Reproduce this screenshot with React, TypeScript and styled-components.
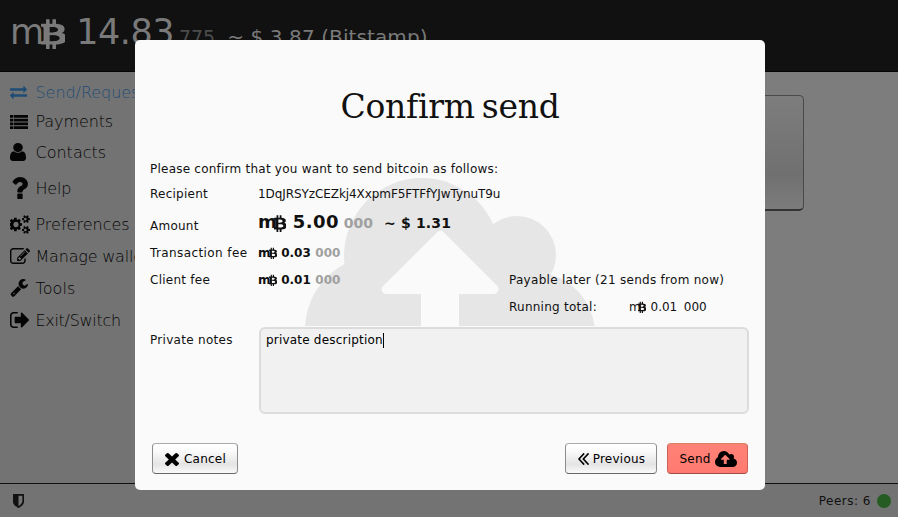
import React from 'react';
import styled, { createGlobalStyle, css } from 'styled-components';

const GlobalStyle = createGlobalStyle`
  *, *::before, *::after { box-sizing: border-box; }
  html, body { margin: 0; padding: 0; }
  body {
    font-family: "DejaVu Sans", Verdana, sans-serif;
    font-size: 12px;
    color: #111;
    overflow: hidden;
  }
`;

/* ---------- icons ---------- */

type IconDef = { box: string; d: string };

const icons: Record<string, IconDef> = {
  exchange: {
    box: '0 288 1792 1344',
    d: 'M1792 1184v192q0 13-9.5 22.5t-22.5 9.5h-1376v192q0 13-9.5 22.5t-22.5 9.5q-12 0-24-10l-319-320q-9-9-9-22 0-14 9-23l320-320q9-9 23-9 13 0 22.5 9.5t9.5 22.5v192h1376q13 0 22.5 9.5t9.5 22.5zm0-544q0 14-9 23l-320 320q-9 9-23 9-13 0-22.5-9.5t-9.5-22.5v-192h-1376q-13 0-22.5-9.5t-9.5-22.5v-192q0-13 9.5-22.5t22.5-9.5h1376v-192q0-14 9-23t23-9q12 0 24 10l319 319q9 9 9 23z',
  },
  list: {
    box: '0 0 18 14',
    d: 'M0 0h3v2.700H0zM3.600 0h14.400v2.700H3.600zM0 3.770h3v2.700H0zM3.600 3.770h14.400v2.700H3.600zM0 7.530h3v2.700H0zM3.600 7.530h14.400v2.700H3.600zM0 11.300h3v2.700H0zM3.600 11.300h14.400v2.700H3.600z',
  },
  user: {
    box: '256 128 1280 1536',
    d: 'M1536 1399q0 109-62.5 187t-150.5 78h-854q-88 0-150.5-78t-62.5-187q0-85 8.5-160.5t31.5-152 58.5-131 94-89 134.5-34.5q131 128 313 128t313-128q76 0 134.5 34.5t94 89 58.5 131 31.5 152 8.5 160.5zm-256-887q0 159-112.5 271.5t-271.5 112.5-271.5-112.5-112.5-271.5 112.5-271.5 271.5-112.5 271.5 112.5 112.5 271.5z',
  },
  question: {
    box: '450 256 960 1280',
    d: 'M1088 1256v240q0 16-12 28t-28 12h-240q-16 0-28-12t-12-28v-240q0-16 12-28t28-12h240q16 0 28 12t12 28zm316-600q0 54-15.5 101t-35 76.5-55 59.5-57.5 43.5-61 35.5q-41 23-68.5 65t-27.5 67q0 17-12 32.5t-28 15.5h-240q-15 0-25.5-18.5t-10.5-37.5v-45q0-83 65-156.5t143-108.5q59-27 84-56t25-76q0-42-46.5-74t-107.5-32q-65 0-108 29-35 25-107 115-13 16-31 16-12 0-25-8l-164-125q-13-10-15.5-25t5.5-28q160-266 464-266 80 0 161 31t146 83 106 127.5 41 158.5z',
  },
  cogs: {
    box: '0 0 1920 1792',
    d: 'M832 896q0-106-75-181t-181-75-181 75-75 181 75 181 181 75 181-75 75-181zm768 512q0-52-38-90t-90-38-90 38-38 90q0 53 37.5 90.5t90.5 37.5 90.5-37.5 37.5-90.5zm0-1024q0-52-38-90t-90-38-90 38-38 90q0 53 37.5 90.5t90.5 37.5 90.5-37.5 37.5-90.5zm-448 421v185q0 10-7 19.5t-16 10.5l-155 24q-11 35-32 76 34 48 90 115 7 11 7 20 0 12-7 19-23 30-82.5 89.5t-78.5 59.5q-11 0-21-7l-115-90q-37 19-77 31-11 108-23 155-7 24-30 24h-186q-11 0-20-7.5t-10-17.5l-23-153q-34-10-75-31l-118 89q-7 7-20 7-11 0-21-8-144-133-144-160 0-9 7-19 10-14 41-53t47-61q-23-44-35-82l-152-24q-10-1-17-9.5t-7-19.5v-185q0-10 7-19.5t16-10.5l155-24q11-35 32-76-34-48-90-115-7-11-7-20 0-12 7-20 22-30 82-89t79-59q11 0 21 7l115 90q34-18 77-32 11-108 23-154 7-24 30-24h186q11 0 20 7.5t10 17.5l23 153q34 10 75 31l118-89q8-7 20-7 11 0 21 8 144 133 144 160 0 8-7 19-12 16-42 54t-45 60q23 48 34 82l152 23q10 2 17 10.5t7 19.5zm768 533v140q0 16-149 31-12 27-30 52 51 113 51 138 0 4-4 7-122 71-124 71-8 0-46-47t-52-68q-20 2-30 2t-30-2q-14 21-52 68t-46 47q-2 0-124-71-4-3-4-7 0-25 51-138-18-25-30-52-149-15-149-31v-140q0-16 149-31 13-29 30-52-51-113-51-138 0-4 4-7 4-2 35-20t59-34 30-16q8 0 46 46.5t52 67.5q20-2 30-2t30 2q51-71 92-112l6-2q4 0 124 70 4 3 4 7 0 25-51 138 17 23 30 52 149 15 149 31zm0-1024v140q0 16-149 31-12 27-30 52 51 113 51 138 0 4-4 7-122 71-124 71-8 0-46-47t-52-68q-20 2-30 2t-30-2q-14 21-52 68t-46 47q-2 0-124-71-4-3-4-7 0-25 51-138-18-25-30-52-149-15-149-31v-140q0-16 149-31 13-29 30-52-51-113-51-138 0-4 4-7 4-2 35-20t59-34 30-16q8 0 46 46.5t52 67.5q20-2 30-2t30 2q51-71 92-112l6-2q4 0 124 70 4 3 4 7 0 25-51 138 17 23 30 52 149 15 149 31z',
  },
  edit: {
    box: '0 128 1792 1408',
    d: 'M888 1184l116-116-152-152-116 116v56h96v96h56zm440-720q-16-16-33 1l-350 350q-17 17-1 33t33-1l350-350q17-17 1-33zm80 594v190q0 119-84.5 203.5t-203.5 84.5h-832q-119 0-203.5-84.5t-84.5-203.5v-832q0-119 84.5-203.5t203.5-84.5h832q63 0 117 25 15 7 18 23 3 17-9 29l-49 49q-14 14-32 8-23-6-45-6h-832q-66 0-113 47t-47 113v832q0 66 47 113t113 47h832q66 0 113-47t47-113v-126q0-13 9-22l64-64q15-15 35-7t20 29zm-96-738l288 288-672 672h-288v-288zm444 132l-92 92-288-288 92-92q28-28 68-28t68 28l152 152q28 28 28 68t-28 68z',
  },
  wrench: {
    box: '21 128 1705 1660',
    d: 'M448 1472q0-26-19-45t-45-19-45 19-19 45 19 45 45 19 45-19 19-45zm644-420l-682 682q-37 37-90 37-52 0-91-37l-106-108q-38-36-38-90 0-53 38-91l681-681q39 98 114.5 173.5t173.5 114.5zm634-435q0 39-23 106-47 134-164.5 217.5t-258.5 83.5q-185 0-316.5-131.5t-131.5-316.5 131.5-316.5 316.5-131.5q58 0 121.5 16.5t107.5 46.5q16 11 16 28t-16 28l-293 169v224l193 107q5-3 79-48.5t135.5-81 70.5-35.5q15 0 23.5 10t8.5 25z',
  },
  exit: {
    box: '64 256 1568 1280',
    d: 'M704 1440q0 4 1 20t.5 26.5-3 23.5-10 19.5-20.5 6.5h-320q-119 0-203.5-84.5t-84.5-203.5v-704q0-119 84.5-203.5t203.5-84.5h320q13 0 22.5 9.5t9.5 22.5q0 4 1 20t.5 26.5-3 23.5-10 19.5-20.5 6.5h-320q-66 0-113 47t-47 113v704q0 66 47 113t113 47h312l11.5 1 11.5 3 8 5.5 7 9 2 13.5zm928-544q0 26-19 45l-544 544q-19 19-45 19t-45-19-19-45v-288h-448q-26 0-45-19t-19-45v-384q0-26 19-45t45-19h448v-288q0-26 19-45t45-19 45 19l544 544q19 19 19 45z',
  },
  shield: {
    box: '256 128 1280 1536',
    d: 'M1344 960v-640h-448v1137q119-63 213-137 235-184 235-360zm192-768v768q0 86-33.5 170.5t-83 150-118 127.5-126.5 103-121 77.5-89.5 49.5-42.5 20q-12 6-26 6t-26-6q-16-7-42.5-20t-89.5-49.5-121-77.5-126.5-103-118-127.5-83-150-33.5-170.5v-768q0-26 19-45t45-19h1152q26 0 45 19t19 45z',
  },
  times: {
    box: '302 366 1188 1188',
    d: 'M1490 1322q0 40-28 68l-136 136q-28 28-68 28t-68-28l-294-294-294 294q-28 28-68 28t-68-28l-136-136q-28-28-28-68t28-68l294-294-294-294q-28-28-28-68t28-68l136-136q28-28 68-28t68 28l294 294 294-294q28-28 68-28t68 28l136 136q28 28 28 68t-28 68l-294 294 294 294q28 28 28 68z',
  },
  back: {
    box: '429 461 966 998',
    d: 'M1011 1376q0 13-10 23l-50 50q-10 10-23 10t-23-10l-466-466q-10-10-10-23t10-23l466-466q10-10 23-10t23 10l50 50q10 10 10 23t-10 23l-393 393 393 393q10 10 10 23zm384 0q0 13-10 23l-50 50q-10 10-23 10t-23-10l-466-466q-10-10-10-23t10-23l466-466q10-10 23-10t23 10l50 50q10 10 10 23t-10 23l-393 393 393 393q10 10 10 23z',
  },
  upload: {
    box: '-64 128 1920 1408',
    d: 'M1216 864q0-14-9-23l-352-352q-9-9-23-9t-23 9l-351 351q-10 12-10 24 0 14 9 23t23 9h224v352q0 13 9.5 22.5t22.5 9.5h192q13 0 22.5-9.5t9.5-22.5v-352h224q13 0 22.5-9.5t9.5-22.5zm640 288q0 159-112.5 271.5t-271.5 112.5h-1088q-185 0-316.5-131.5t-131.5-316.5q0-130 70-240t188-165q-2-30-2-43 0-212 150-362t362-150q156 0 285.5 87t188.5 231q71-62 166-62 106 0 181 75t75 181q0 76-41 138 130 31 213.5 135.5t83.5 238.5z',
  },
  bitcoin: {
    box: '341 0 1040 1794',
    d: 'M1362 642q18 182-131 258 117 28 175 103t45 214q-7 71-32.5 125t-64.5 89-97 58.5-121.5 34.5-145.5 15v255h-154v-251q-80 0-122-1v252h-154v-255q-18 0-54-.5t-55-.5h-200l31-183h111q50 0 58-51v-402h16q-6-1-16-1v-287q-13-68-89-68h-111v-164l212 1q64 0 97-1v-252h154v247q82-2 122-2v-245h154v252q79 7 140 22.5t113 45 82.5 78 36.5 114.5zm-215 545q0-36-15-64t-37-46-57.5-30.5-65.5-18.5-74-9-69-3-64.5 1-47.5 1v338q8 0 37 .5t48 .5 53-1.5 58.5-4 57-8.5 55.5-14 47.5-21 39.5-30 24.5-40 9.5-51zm-71-476q0-33-12.5-58.5t-30.5-42-48-28-55-16.5-61.5-8-58-2.5-54 1-39.5.5v307q5 0 34.5.5t46.5 0 50-2 55-5.5 51.5-11 48.5-18.5 37-27 27-38.5 9-51z',
  },
};

const Svg = styled.svg`
  display: block;
  flex: none;
  fill: currentColor;
`;

function Icon({ name, w, h }: { name: string; w: number; h: number }) {
  const icon = icons[name];
  return (
    <Svg width={w} height={h} viewBox={icon.box} preserveAspectRatio="none">
      <path d={icon.d} />
    </Svg>
  );
}

/* ---------- wallet window behind the dialog ---------- */

const Window = styled.div`
  position: relative;
  display: flex;
  flex-direction: column;
  width: 898px;
  height: 517px;
  overflow: hidden;
  background: #7d7d7d;
`;

const Header = styled.header`
  display: flex;
  align-items: baseline;
  flex: none;
  height: 72px;
  padding-left: 10px;
  background: #111;
  border-bottom: 1px solid #050505;
  color: #7a7a7a;
  line-height: 64px;
  white-space: pre;
`;

const Balance = styled.span`
  font-size: 35px;
  letter-spacing: -0.5px;
`;

const BalanceMinor = styled.span`
  margin-left: 5px;
  font-size: 19px;
  color: #4c4c4c;
`;

const BalanceFiat = styled.span`
  margin-left: 12px;
  font-size: 20px;
  letter-spacing: 0.1px;
`;

const BitcoinMark = styled.span<{ $left: number; $right: number; $drop: number }>`
  display: inline-block;
  vertical-align: baseline;
  margin-left: ${p => p.$left}px;
  margin-right: ${p => p.$right}px;
  margin-bottom: -${p => p.$drop}px;
`;

const Body = styled.div`
  display: flex;
  flex: 1;
  min-height: 0;
`;

const Sidebar = styled.nav`
  flex: none;
  width: 200px;
  padding-top: 6px;
  background: #737373;
`;

const NavItem = styled.a<{ $height: number; $track: number; $active?: boolean }>`
  display: flex;
  align-items: center;
  height: ${p => p.$height}px;
  padding-left: 10px;
  color: ${p => (p.$active ? '#1f4c76' : '#050505')};
  font-size: 16px;
  font-weight: 200;
  letter-spacing: ${p => p.$track}px;
  white-space: nowrap;
`;

const NavIcon = styled.span<{ $indent?: number }>`
  display: flex;
  flex: none;
  width: 25.5px;
  padding-left: ${p => p.$indent ?? 0}px;
`;

const Content = styled.main`
  display: flex;
  flex: 1;
  justify-content: flex-end;
  padding: 23px 94px 0 0;
`;

const ActionTile = styled.div`
  width: 200px;
  height: 116px;
  border: 1px solid #4a4a4a;
  border-bottom: 2px solid #333;
  border-radius: 5px;
  background: linear-gradient(#7d7d7d, #707070 70%, #7c7c7c);
`;

const Footer = styled.footer`
  display: flex;
  flex: none;
  align-items: center;
  justify-content: space-between;
  height: 34px;
  padding: 0 7px 0 13px;
  background: #737373;
  border-top: 1px solid #111;
`;

const Peers = styled.span`
  display: flex;
  align-items: center;
  gap: 6px;
  letter-spacing: 0.5px;
`;

const StatusDot = styled.i`
  width: 14px;
  height: 14px;
  border-radius: 50%;
  background: #255c24;
`;

/* ---------- dialog ---------- */

const DialogLayer = styled.div`
  position: absolute;
  inset: 0;
  display: flex;
  justify-content: center;
  align-items: flex-start;
  padding: 40px 0 0 2px;
`;

const Dialog = styled.section`
  position: relative;
  display: flex;
  flex-direction: column;
  width: 630px;
  height: 450px;
  padding: 0 15px;
  background: #fafafa;
  border-radius: 5px;
`;

const Watermark = styled.svg`
  position: absolute;
  left: 166px;
  top: 136px;
  fill: #e6e6e6;
`;

const Title = styled.h1`
  height: 116px;
  margin: 0;
  padding-top: 47px;
  font-family: "DejaVu Serif", serif;
  font-size: 33px;
  font-weight: 400;
  line-height: 40px;
  text-align: center;
  letter-spacing: -0.3px;
  word-spacing: -3px;
  font-variant-ligatures: none;
`;

const Row = styled.div<{ $height: number }>`
  position: relative;
  display: grid;
  grid-template-columns: 108px 251px 120px 1fr;
  align-items: center;
  height: ${p => p.$height}px;
  white-space: pre;
`;

const Text = styled.span<{ $track?: number; $span?: boolean }>`
  letter-spacing: ${p => p.$track ?? 0.25}px;
  ${p => p.$span && css`grid-column: span 4;`}
`;

const AmountLabel = styled(Text)`
  padding-top: 6px;
`;

const Note = styled(Text)`
  grid-column: 3 / span 2;
`;

const RunningLabel = styled(Text)`
  grid-column: 3;
`;

const Money = styled.span<{ $size: number; $weight: number; $track?: number }>`
  font-size: ${p => p.$size}px;
  font-weight: ${p => p.$weight};
  letter-spacing: ${p => p.$track ?? 0}px;
  line-height: 20px;
`;

const Minor = styled.span<{ $size: number; $gap: number; $muted?: boolean }>`
  margin-left: ${p => p.$gap}px;
  font-size: ${p => p.$size}px;
  letter-spacing: 0;
  color: ${p => (p.$muted ? '#a0a0a0' : 'inherit')};
`;

const Fiat = styled(Minor)`
  letter-spacing: 0.15px;
`;

const NotesRow = styled.div`
  position: relative;
  display: grid;
  grid-template-columns: 109px 490px;
  padding-top: 7px;
`;

const NotesLabel = styled(Text)`
  padding-top: 6px;
`;

const NotesBox = styled.div`
  display: flex;
  align-items: flex-start;
  height: 87px;
  padding: 4px 5px;
  background: #f1f1f1;
  border: 2px solid #dcdcdc;
  border-radius: 6px;
  color: #000;
`;

const Caret = styled.i`
  width: 1px;
  height: 15px;
  background: #000;
`;

const Actions = styled.div`
  display: flex;
  gap: 10px;
  padding: 29px 2px 0;
`;

const Button = styled.button<{ $width: number; $gap: number; $danger?: boolean; $start?: boolean }>`
  display: flex;
  align-items: center;
  justify-content: center;
  gap: ${p => p.$gap}px;
  width: ${p => p.$width}px;
  height: 31px;
  padding: 1px 0 0 1px;
  margin-right: ${p => (p.$start ? 'auto' : 0)};
  border: 1px solid #8c8c8c;
  border-top-color: #aaa;
  border-bottom-color: #666;
  border-radius: 4px;
  background: linear-gradient(#fff, #fafafa 25%, #e4e4e4 70%, #fafafa);
  color: #000;
  font: 12px "DejaVu Sans", sans-serif;
  letter-spacing: 0.25px;
  ${p => p.$danger && css`
    border-color: #c9605a;
    border-top-color: #d98565;
    border-bottom-color: #a34c48;
    background: linear-gradient(#ff8276, #ff7a70);
  `}
`;

const navItems = [
  { label: 'Send/Request', icon: 'exchange', w: 17, h: 13, row: 29, track: -0.05, active: true },
  { label: 'Payments', icon: 'list', w: 18, h: 14, row: 29, track: -0.1 },
  { label: 'Contacts', icon: 'user', w: 16, h: 18, row: 32, track: 0 },
  { label: 'Help', icon: 'question', w: 16, h: 22, row: 40, track: -0.2, indent: 1.5 },
  { label: 'Preferences', icon: 'cogs', w: 20, h: 19, row: 32, track: 0 },
  { label: 'Manage wallet', icon: 'edit', w: 20, h: 16, row: 32, track: -0.2 },
  { label: 'Tools', icon: 'wrench', w: 18, h: 18, row: 32, track: 0.1 },
  { label: 'Exit/Switch', icon: 'exit', w: 19, h: 16, row: 32, track: -0.3 },
];

function Fee({ amount, weight, gap, muted }: { amount: string; weight: number; gap: number; muted?: boolean }) {
  return (
    <Money $size={12} $weight={weight}>
      m
      <BitcoinMark $left={weight > 400 ? -2 : -3} $right={weight > 400 ? 0.5 : 1} $drop={2}>
        <Icon name="bitcoin" w={8} h={12} />
      </BitcoinMark>
      {' ' + amount}
      <Minor $size={12} $gap={gap} $muted={muted}>000</Minor>
    </Money>
  );
}

export default function App() {
  return (
    <>
      <GlobalStyle />
      <Window>
        <Header>
          <Balance>
            m
            <BitcoinMark $left={-3} $right={1} $drop={5}>
              <Icon name="bitcoin" w={24} h={32} />
            </BitcoinMark>
            {' 14.83'}
          </Balance>
          <BalanceMinor>775</BalanceMinor>
          <BalanceFiat>~ $ 3.87 (Bitstamp)</BalanceFiat>
        </Header>
        <Body>
          <Sidebar>
            {navItems.map(item => (
              <NavItem key={item.label} $height={item.row} $track={item.track} $active={item.active}>
                <NavIcon $indent={item.indent}>
                  <Icon name={item.icon} w={item.w} h={item.h} />
                </NavIcon>
                {item.label}
              </NavItem>
            ))}
          </Sidebar>
          <Content>
            <ActionTile />
          </Content>
        </Body>
        <Footer>
          <Icon name="shield" w={11} h={14} />
          <Peers>
            Peers: 6
            <StatusDot />
          </Peers>
        </Footer>

        <DialogLayer>
          <Dialog>
            <Watermark width="300" height="150" viewBox="300 176 300 150">
              <circle cx="421" cy="256" r="78" />
              <circle cx="516" cy="255" r="39" />
              <circle cx="379" cy="330" r="75" />
              <circle cx="532" cy="334" r="62" />
              <path d="M380 240H520V326H380z" />
              <path
                fill="#fafafa"
                d="M436.500 232q3-3 6 0l54 54q2 2 0.500 5t-4.500 3H458v32H420V294H386q-4 0-5-3t1-5z"
              />
            </Watermark>
            <Title>Confirm send</Title>
            <Row $height={25}>
              <Text $span $track={0.23}>Please confirm that you want to send bitcoin as follows:</Text>
            </Row>
            <Row $height={25}>
              <Text>Recipient</Text>
              <Text $track={-0.08}>1DqJRSYzCEZkj4XxpmF5FTFfYJwTynuT9u</Text>
            </Row>
            <Row $height={33}>
              <AmountLabel>Amount</AmountLabel>
              <Money $size={18} $weight={700} $track={0.4}>
                m
                <BitcoinMark $left={-3} $right={0} $drop={4}>
                  <Icon name="bitcoin" w={12} h={18} />
                </BitcoinMark>
                {' 5.00'}
                <Minor $size={14} $gap={5} $muted>000</Minor>
                <Fiat $size={14} $gap={11}>~ $ 1.31</Fiat>
              </Money>
            </Row>
            <Row $height={27}>
              <Text $track={0.4}>Transaction fee</Text>
              <Fee amount="0.03" weight={700} gap={4.5} muted />
            </Row>
            <Row $height={27}>
              <Text>Client fee</Text>
              <Fee amount="0.01" weight={700} gap={4.5} muted />
              <Note $track={0.28}>Payable later (21 sends from now)</Note>
            </Row>
            <Row $height={27}>
              <RunningLabel>Running total:</RunningLabel>
              <Fee amount="0.01" weight={400} gap={6.500} />
            </Row>
            <NotesRow>
              <NotesLabel $track={0.3}>Private notes</NotesLabel>
              <NotesBox>
                <Text $track={0.2}>private description</Text>
                <Caret />
              </NotesBox>
            </NotesRow>
            <Actions>
              <Button $width={86} $gap={5} $start>
                <Icon name="times" w={14} h={13} />
                Cancel
              </Button>
              <Button $width={92} $gap={4}>
                <Icon name="back" w={11} h={12} />
                Previous
              </Button>
              <Button $width={81} $gap={4} $danger>
                Send
                <Icon name="upload" w={22} h={16} />
              </Button>
            </Actions>
          </Dialog>
        </DialogLayer>
      </Window>
    </>
  );
}
